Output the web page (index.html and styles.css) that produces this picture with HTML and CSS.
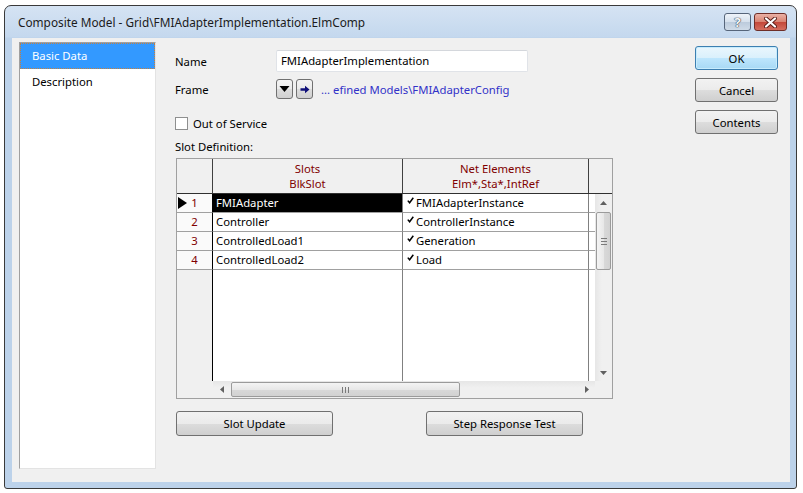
FILE: index.html
```html
<!DOCTYPE html>
<html>
<head>
<meta charset="utf-8">
<link rel="stylesheet" href="styles.css">
</head>
<body>
<div class="window">
  <div class="titlebar">
    <span class="title">Composite Model - Grid\FMIAdapterImplementation.ElmComp</span>
    <div class="capbtns">
      <div class="cap help">?</div>
      <div class="cap close">
        <svg width="13" height="11" viewBox="0 0 13 11"><path d="M2 1.5 L11 9.5 M11 1.5 L2 9.5" stroke="#5a1d18" stroke-width="4" stroke-linecap="round"/><path d="M2 1.5 L11 9.5 M11 1.5 L2 9.5" stroke="#fff" stroke-width="2.2" stroke-linecap="round"/></svg>
      </div>
    </div>
  </div>
  <div class="content">
    <div class="nav">
      <div class="nav-item sel">Basic Data</div>
      <div class="nav-item">Description</div>
    </div>
    <div class="form">
      <div class="frow name-row">
        <span class="lbl">Name</span>
        <div class="input">FMIAdapterImplementation</div>
      </div>
      <div class="frow frame-row">
        <span class="lbl">Frame</span>
        <div class="sbtn"><svg width="11" height="8" viewBox="0 0 11 8"><path d="M0.5 1 L10.5 1 L5.5 7 Z" fill="#000"/></svg></div>
        <div class="sbtn"><svg width="10" height="9" viewBox="0 0 10 9"><path d="M0.5 3.3 H5 V0.8 L9.5 4.5 L5 8.2 V5.7 H0.5 Z" fill="#10107a"/></svg></div>
        <span class="link">... efined Models\FMIAdapterConfig</span>
      </div>
      <div class="frow oos-row">
        <div class="chk"></div>
        <span class="chk-lbl">Out of Service</span>
      </div>
      <div class="slotdef">Slot Definition:</div>
      <div class="grid">
        <div class="ghead">
          <div class="hc rh"></div>
          <div class="hc c1"><span>Slots</span><span>BlkSlot</span></div>
          <div class="hc c2"><span>Net Elements</span><span>Elm*,Sta*,IntRef</span></div>
          <div class="hc c3"></div>
        </div>
        <div class="gbody">
          <div class="gmain">
            <div class="grow">
              <div class="cell rh"><svg class="cur" width="9" height="12" viewBox="0 0 9 12"><path d="M0 0 L9 6 L0 12 Z" fill="#000"/></svg>1</div>
              <div class="cell c1 hl">FMIAdapter</div>
              <div class="cell c2"><svg class="ck" width="7" height="7" viewBox="0 0 7 7"><path d="M0.8 3.6 L2.6 5.8 L6.3 0.8" stroke="#000" stroke-width="1.5" fill="none"/></svg>FMIAdapterInstance</div>
              <div class="cell c3"></div>
            </div>
            <div class="grow">
              <div class="cell rh">2</div>
              <div class="cell c1">Controller</div>
              <div class="cell c2"><svg class="ck" width="7" height="7" viewBox="0 0 7 7"><path d="M0.8 3.6 L2.6 5.8 L6.3 0.8" stroke="#000" stroke-width="1.5" fill="none"/></svg>ControllerInstance</div>
              <div class="cell c3"></div>
            </div>
            <div class="grow">
              <div class="cell rh">3</div>
              <div class="cell c1">ControlledLoad1</div>
              <div class="cell c2"><svg class="ck" width="7" height="7" viewBox="0 0 7 7"><path d="M0.8 3.6 L2.6 5.8 L6.3 0.8" stroke="#000" stroke-width="1.5" fill="none"/></svg>Generation</div>
              <div class="cell c3"></div>
            </div>
            <div class="grow">
              <div class="cell rh">4</div>
              <div class="cell c1">ControlledLoad2</div>
              <div class="cell c2"><svg class="ck" width="7" height="7" viewBox="0 0 7 7"><path d="M0.8 3.6 L2.6 5.8 L6.3 0.8" stroke="#000" stroke-width="1.5" fill="none"/></svg>Load</div>
              <div class="cell c3"></div>
            </div>
            <div class="gfill">
              <div class="rh"></div>
              <div class="c1"></div>
              <div class="c2"></div>
              <div class="c3"></div>
            </div>
            <div class="hscroll">
              <div class="hs-spacer"></div>
              <div class="sb-h">
                <div class="sb-btn"><svg width="4" height="7" viewBox="0 0 4 7"><path d="M4 0 L0 3.5 L4 7 Z" fill="#606060"/></svg></div>
                <div class="thumb-h"><svg width="7" height="6" viewBox="0 0 7 6"><path d="M0.5 0 V6 M3.5 0 V6 M6.5 0 V6" stroke="#7a7a7a" stroke-width="1"/></svg></div>
                <div class="sb-track"></div>
                <div class="sb-btn"><svg width="4" height="7" viewBox="0 0 4 7"><path d="M0 0 L4 3.5 L0 7 Z" fill="#606060"/></svg></div>
              </div>
            </div>
          </div>
          <div class="vcol">
            <div class="sb-v">
              <div class="sb-btn"><svg width="7" height="4" viewBox="0 0 7 4"><path d="M0 4 L3.5 0 L7 4 Z" fill="#606060"/></svg></div>
              <div class="thumb-v"><svg width="6" height="7" viewBox="0 0 6 7"><path d="M0 0.5 H6 M0 3.5 H6 M0 6.5 H6" stroke="#7a7a7a" stroke-width="1"/></svg></div>
              <div class="sb-track"></div>
              <div class="sb-btn"><svg width="7" height="4" viewBox="0 0 7 4"><path d="M0 0 L3.5 4 L7 0 Z" fill="#606060"/></svg></div>
            </div>
            <div class="corner"></div>
          </div>
        </div>
      </div>
      <div class="frow bottom-btns">
        <div class="btn wide">Slot Update</div>
        <div class="btn wide">Step Response Test</div>
      </div>
    </div>
    <div class="actions">
      <div class="btn act def">OK</div>
      <div class="btn act">Cancel</div>
      <div class="btn act">Contents</div>
    </div>
  </div>
</div>
</body>
</html>
```

FILE: styles.css
```css
* { box-sizing: border-box; }
html, body { margin: 0; padding: 0; }
body {
  width: 803px;
  height: 493px;
  overflow: hidden;
  background: #ffffff;
  font-family: "Noto Sans", "DejaVu Sans", sans-serif;
  font-size: 11.3px;
  color: #000;
}
.window {
  margin: 5px 0 0 4px;
  width: 793px;
  height: 484px;
  border: 1px solid #3a3a3a;
  border-radius: 7px 7px 3px 3px;
  background: linear-gradient(#d5e3f3 0px, #c4d8ee 31px, #bcd2ea 32px, #bcd2ea 100%);
  padding: 0 6px 6px 7px;
  display: flex;
  flex-direction: column;
}
.titlebar {
  height: 32px;
  display: flex;
  align-items: flex-start;
  flex-shrink: 0;
}
.title {
  margin: 8px 0 0 6px;
  line-height: 16px;
  font-size: 11.8px;
  color: #1b1b1b;
}
.capbtns {
  margin: 7px 3px 0 auto;
  display: flex;
  gap: 3px;
}
.cap {
  height: 18px;
  border: 1px solid #56657a;
  border-radius: 3px;
  display: flex;
  align-items: center;
  justify-content: center;
}
.help {
  width: 27px;
  background: linear-gradient(#eef3f9 0%, #d6e1ed 48%, #bccbdc 52%, #cfdbe8 100%);
  color: #f8f8f8;
  font-weight: bold;
  font-size: 13px;
  line-height: 16px;
  text-shadow: 0 0 1px #3c4a5c, 0 0 1px #3c4a5c, 0 0 1px #3c4a5c;
}
.close {
  width: 33px;
  border-color: #6e2e28;
  background: linear-gradient(#eab1a6 0%, #d98473 48%, #c4483a 52%, #d46e5f 100%);
}
.content {
  flex: 1;
  background: #f0f0f0;
  display: flex;
  padding: 4px 12px 13px 7px;
}
.nav {
  width: 137px;
  background: #fff;
  border: 1px solid;
  border-color: #a0a0a0 #e3e3e3 #e3e3e3 #a0a0a0;
  flex-shrink: 0;
}
.nav-item {
  height: 26px;
  line-height: 24px;
  padding-left: 11px;
  border: 1px solid transparent;
}
.nav-item.sel {
  background: #3399ff;
  color: #fff;
  border: 1px dotted #c8803c;
  padding-left: 11px;
}
.form {
  margin-left: 19px;
  padding-top: 8px;
  width: 440px;
  display: flex;
  flex-direction: column;
}
.frow {
  display: flex;
  align-items: center;
}
.lbl {
  width: 101px;
  flex-shrink: 0;
}
.name-row { height: 22px; }
.input {
  width: 252px;
  height: 22px;
  background: #fff;
  border: 1px solid #e0e3e8;
  border-top-color: #d4d7dc;
  border-radius: 2px;
  padding-left: 4px;
  line-height: 20px;
}
.frame-row {
  margin-top: 7px;
  height: 20px;
}
.sbtn {
  width: 17px;
  height: 20px;
  border: 1px solid #707070;
  border-radius: 3px;
  background: linear-gradient(#f4f4f4 0%, #ebebeb 50%, #dddddd 50%, #d0d0d0 100%);
  display: flex;
  align-items: center;
  justify-content: center;
  margin-right: 3px;
}
.link {
  margin-left: 5px;
  color: #3232c8;
}
.oos-row {
  margin-top: 17px;
  height: 14px;
}
.chk {
  width: 13px;
  height: 13px;
  background: #fff;
  border: 1px solid #8e8f8f;
}
.chk-lbl {
  margin-left: 5px;
}
.slotdef {
  margin-top: 9px;
  line-height: 16px;
  height: 16px;
}
.grid {
  margin-top: 3px;
  margin-left: 1px;
  width: 437px;
  height: 241px;
  border: 1px solid #a0a0a0;
  display: flex;
  flex-direction: column;
  background: #f0f0f0;
}
.ghead {
  display: flex;
  height: 35px;
  border-bottom: 1px solid #303030;
  flex-shrink: 0;
}
.hc {
  background: #f0f0f0;
  border-right: 1px solid #404040;
  display: flex;
  flex-direction: column;
  align-items: center;
  padding-top: 2px;
  color: #800000;
  line-height: 15px;
}
.hc.c3 { border-right: none; }
.rh { width: 36px; flex-shrink: 0; }
.c1 { width: 190px; flex-shrink: 0; }
.c2 { width: 186px; flex-shrink: 0; }
.c3 { width: 23px; flex-shrink: 0; }
.gbody {
  flex: 1;
  display: flex;
}
.gmain {
  width: 418px;
  display: flex;
  flex-direction: column;
}
.gmain .c3 { width: 6px; }
.grow {
  display: flex;
  height: 19px;
}
.cell {
  height: 19px;
  line-height: 18px;
  border-bottom: 1px solid #a0a0a0;
  background: #fff;
  white-space: nowrap;
  overflow: hidden;
}
.cell.rh {
  background: #fafafa;
  border-right: 1px solid #000;
  color: #800000;
  text-align: center;
  position: relative;
}
.cur {
  position: absolute;
  left: 1px;
  top: 3px;
}
.cell.c1 {
  border-right: 1px solid #808080;
  padding-left: 3px;
}
.cell.c1.hl {
  background: #000;
  color: #fff;
}
.cell.c2 {
  border-right: 1px solid #808080;
  padding-left: 4px;
  display: flex;
  align-items: center;
}
.ck {
  margin-right: 2px;
  margin-top: -6px;
}
.gfill {
  flex: 1;
  display: flex;
}
.gfill .rh {
  background: #f0f0f0;
  border-right: 1px solid #000;
}
.gfill .c1, .gfill .c2 {
  background: #fff;
  border-right: 1px solid #808080;
}
.gfill .c3 { background: #fff; }
.hscroll {
  height: 17px;
  display: flex;
  flex-shrink: 0;
}
.hs-spacer {
  width: 36px;
  background: #f0f0f0;
}
.sb-h {
  width: 382px;
  display: flex;
  background: linear-gradient(#e6e6e6, #f0f0f0 40%, #f0f0f0);
}
.sb-btn {
  width: 17px;
  height: 17px;
  display: flex;
  align-items: center;
  justify-content: center;
  flex-shrink: 0;
}
.sb-track { flex: 1; }
.thumb-h {
  width: 229px;
  margin: 1px 0 1px 1px;
  border: 1px solid #9b9b9b;
  border-radius: 2px;
  background: linear-gradient(#f4f4f4 0%, #e8e8e8 50%, #d9d9d9 51%, #d2d2d2 100%);
  display: flex;
  align-items: center;
  justify-content: center;
}
.vcol {
  width: 17px;
  display: flex;
  flex-direction: column;
}
.sb-v {
  flex: 1;
  display: flex;
  flex-direction: column;
  background: linear-gradient(to right, #e6e6e6, #f0f0f0 40%, #f0f0f0);
}
.thumb-v {
  height: 58px;
  margin: 1px 1px 0 1px;
  border: 1px solid #9b9b9b;
  border-radius: 2px;
  background: linear-gradient(to right, #f4f4f4 0%, #e8e8e8 50%, #d9d9d9 51%, #d2d2d2 100%);
  display: flex;
  align-items: center;
  justify-content: center;
  flex-shrink: 0;
}
.corner {
  height: 17px;
  background: #f0f0f0;
  flex-shrink: 0;
}
.bottom-btns {
  margin-top: 12px;
  gap: 93px;
  margin-left: 1px;
}
.btn {
  border: 1px solid #707070;
  border-radius: 3px;
  background: linear-gradient(#f2f2f2 0%, #ebebeb 50%, #dddddd 50%, #cfcfcf 100%);
  display: flex;
  align-items: center;
  justify-content: center;
}
.btn.wide {
  width: 157px;
  height: 25px;
}
.actions {
  margin-left: auto;
  padding-top: 4px;
  width: 83px;
  display: flex;
  flex-direction: column;
  gap: 8px;
}
.btn.act {
  height: 24px;
}
.btn.def {
  border-color: #3c7fb1;
  background: linear-gradient(#eaf6fd 0%, #d9f0fc 50%, #bee6fd 50%, #a7d9f5 100%);
  box-shadow: inset 0 0 0 1px #c7ecfd;
}
```
